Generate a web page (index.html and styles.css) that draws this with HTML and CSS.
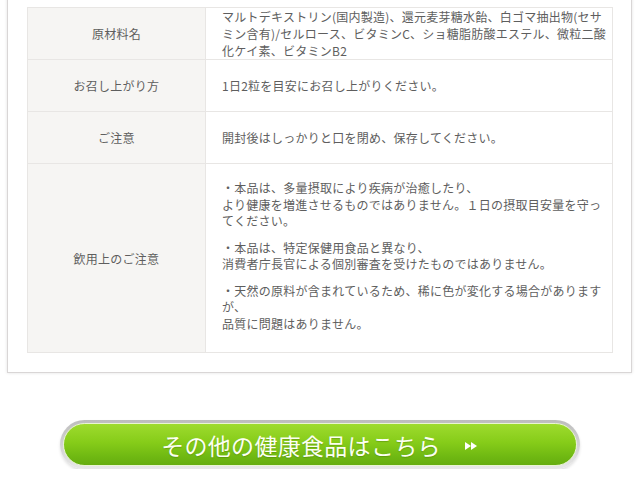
FILE: index.html
```html
<!DOCTYPE html>
<html lang="ja">
<head>
  <meta charset="UTF-8" />
  <meta name="viewport" content="width=device-width, initial-scale=1.0" />
  <title>商品詳細</title>
  <link rel="stylesheet" href="styles.css">
</head>
<body>
  <!-- 商品情報テーブル -->
  <div class="spec-box">
    <table class="spec-table">
      <tr class="row-short">
        <th>原材料名</th>
        <td>マルトデキストリン(国内製造)、還元麦芽糖水飴、白ゴマ抽出物(セサミン含有)/セルロース、ビタミンC、ショ糖脂肪酸エステル、微粒二酸化ケイ素、ビタミンB2</td>
      </tr>
      <tr>
        <th>お召し上がり方</th>
        <td>1日2粒を目安にお召し上がりください。</td>
      </tr>
      <tr>
        <th>ご注意</th>
        <td>開封後はしっかりと口を閉め、保存してください。</td>
      </tr>
      <tr class="row-notes">
        <th>飲用上のご注意</th>
        <td>
          <p>・本品は、多量摂取により疾病が治癒したり、<br>より健康を増進させるものではありません。１日の摂取目安量を守ってください。</p>
          <p>・本品は、特定保健用食品と異なり、<br>消費者庁長官による個別審査を受けたものではありません。</p>
          <p>・天然の原料が含まれているため、稀に色が変化する場合がありますが、<br>品質に問題はありません。</p>
        </td>
      </tr>
    </table>
  </div>

  <!-- 他の商品へのボタン -->
  <div class="more-wrap">
    <a class="more-btn" href="#">
      <span class="more-inner">
        その他の健康食品はこちら
        <svg class="more-arrow" width="14" height="10" viewBox="0 0 14 10">
          <polygon points="0,1 6,5 0,9" fill="#fff" />
          <polygon points="6,1 12,5 6,9" fill="#fff" />
        </svg>
      </span>
    </a>
  </div>
</body>
</html>
```

FILE: styles.css
```css
/* ページ全体 */
body {
  margin: 0;
  font-family: "Noto Sans CJK JP", "Noto Sans", sans-serif;
  color: #5e5e5e;
  background-color: #fff;
}

/* 白いパネル */
.spec-box {
  width: 625px;
  box-sizing: border-box;
  margin: -14px 0 0 7px;
  padding: 20px 18px 19px 19px;
  background-color: #fff;
  border: 1px solid #d9d6d6;
  box-shadow: 0 0 3px rgba(0, 0, 0, 0.12);
}

/* 商品情報テーブル */
.spec-table {
  width: 100%;
  border-collapse: collapse;
  font-size: 12px;
  letter-spacing: 0.25px;
}

.spec-table th,
.spec-table td {
  border: 1px solid #e8e6e4;
  height: 51px;
  vertical-align: middle;
  line-height: 17px;
}

.spec-table th {
  width: 177px;
  background-color: #f6f5f3;
  font-weight: normal;
  text-align: center;
  padding: 0;
}

.spec-table td {
  text-align: left;
  padding: 0 4px 0 16px;
}

.row-notes td {
  padding-top: 16px;
  padding-bottom: 20px;
}

.row-notes p {
  margin: 0 0 10px;
  line-height: 16.5px;
}

.row-notes p:last-child {
  margin-bottom: 0;
}

/* 緑のボタン */
.more-wrap {
  padding-top: 47px;
  display: flex;
  justify-content: center;
}

.more-btn {
  display: block;
  width: 520px;
  height: 49px;
  box-sizing: border-box;
  padding: 3px;
  border-radius: 25px;
  background: linear-gradient(#bdbdbd, #d6d6d6 60%, #e8e8e8);
  box-shadow: 0 2px 3px rgba(0, 0, 0, 0.12);
  text-decoration: none;
}

.more-inner {
  display: flex;
  align-items: center;
  justify-content: center;
  gap: 24px;
  height: 100%;
  border-radius: 22px;
  border: 1px solid #e9f5d2;
  box-sizing: border-box;
  background: linear-gradient(#9edb2e, #86cc19 45%, #6fb812 80%, #66ad10);
  color: #fbfff2;
  font-family: "Liberation Serif", "Noto Sans CJK JP", serif;
  font-size: 23px;
  letter-spacing: 0.3px;
  text-shadow: 0 1px 1px rgba(60, 100, 0, 0.35);
}

.more-arrow {
  margin-top: 2px;
}
```
